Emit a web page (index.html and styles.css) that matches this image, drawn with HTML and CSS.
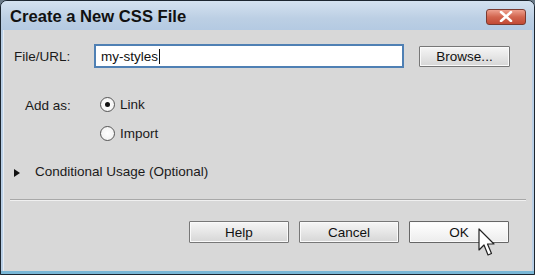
FILE: index.html
```html
<!DOCTYPE html>
<html>
<head>
<meta charset="utf-8">
<link rel="stylesheet" href="styles.css">
</head>
<body>
<div class="window">
  <div class="titlebar">
    <span class="title">Create a New CSS File</span>
    <span class="close"><svg width="16" height="11" viewBox="0 0 16 11"><path d="M3 1 L13 10 M13 1 L3 10" stroke="#fff" stroke-width="2.6" stroke-linecap="round"/></svg></span>
  </div>
  <div class="content">
    <div class="row-file">
      <span class="label">File/URL:</span>
      <div class="input">my-styles<span class="caret"></span></div>
      <button class="btn browse">Browse...</button>
    </div>
    <div class="row-add">
      <span class="label add">Add as:</span>
      <div class="radios">
        <div class="radio-row"><span class="radio checked"></span><span>Link</span></div>
        <div class="radio-row"><span class="radio"></span><span>Import</span></div>
      </div>
    </div>
    <div class="row-cond">
      <span class="tri"></span><span>Conditional Usage (Optional)</span>
    </div>
    <div class="sep"></div>
    <div class="actions">
      <button class="btn act">Help</button>
      <button class="btn act">Cancel</button>
      <button class="btn act ok">OK</button>
    </div>
  </div>
  <svg class="pointer" width="20" height="30" viewBox="0 0 20 30"><path d="M1 1 L1 22 L6 17 L10 27 L13.5 25.5 L9.5 16 L16 16 Z" fill="#fff" stroke="#222" stroke-width="1.2" stroke-linejoin="round"/></svg>
</div>
</body>
</html>
```
FILE: styles.css
```css
html, body { margin: 0; padding: 0; background: #6a7a88; }
body { width: 535px; height: 275px; overflow: hidden; font-family: "Liberation Sans", Arial, sans-serif; font-size: 13.5px; color: #1a1a1a; }
.window {
  position: relative;
  width: 535px; height: 275px; box-sizing: border-box;
  border: 1px solid #1c2630; border-top-left-radius: 7px; border-top-right-radius: 7px;
  background: #b9cfe6;
  display: flex; flex-direction: column;
  padding: 0 2px 3px 2px;
  box-shadow: inset 0 -3px 0 #7ab7d6;
}
.titlebar {
  height: 29px; display: flex; align-items: center; justify-content: space-between;
  background: linear-gradient(#d4e2f0, #bccfe4 60%, #b4cae2);
  margin: 0 -2px; padding: 0 8px 0 9px;
  border-top-left-radius: 6px; border-top-right-radius: 6px;
}
.title { font-weight: bold; font-size: 16.6px; color: #111; padding-top: 2px; }
.close {
  width: 40px; height: 16px; box-sizing: border-box; margin-top: 2px;
  border: 1px solid #7a3a30; border-radius: 3px;
  background: linear-gradient(#eea08e, #d2654f 50%, #c24a35);
  display: flex; align-items: center; justify-content: center;
}
.content {
  flex: 1; background: #d8d8d8; display: flex; flex-direction: column;
  border-left: 1px solid #e6ecf2;
}
.row-file { display: flex; align-items: center; margin-top: 14px; height: 24px; }
.label { width: 80px; padding-left: 10px; }
.input {
  width: 310px; height: 24px; box-sizing: border-box;
  border: 2px solid #4f80b4; background: #fff;
  display: flex; align-items: center; padding-left: 5px; color: #111;
}
.caret { width: 1px; height: 15px; background: #111; margin-left: 1px; }
.btn {
  font-family: inherit; font-size: 13.5px; color: #111;
  height: 21px; box-sizing: border-box; padding: 0;
  border: 1px solid #777; border-radius: 1px;
  background: linear-gradient(#f6f6f6, #e6e6e6 50%, #d6d6d6);
  box-shadow: inset 0 0 0 1px #fafafa;
}
.browse { width: 91px; margin-left: 15px; }
.row-add { display: flex; margin-top: 28px; }
.label.add { width: 75px; padding-left: 21px; padding-top: 2px; }
.radios { display: flex; flex-direction: column; gap: 12px; }
.radio-row { display: flex; align-items: center; gap: 5px; height: 17px; }
.radio {
  width: 15px; height: 15px; box-sizing: border-box; border-radius: 50%;
  border: 1px solid #555; background: radial-gradient(#fff, #eee);
  display: flex; align-items: center; justify-content: center;
}
.radio.checked::after { content: ""; width: 5px; height: 5px; border-radius: 50%; background: #111; }
.row-cond { display: flex; align-items: center; margin-top: 22px; padding-left: 10px; gap: 15px; }
.tri { width: 0; height: 0; border-top: 4px solid transparent; border-bottom: 4px solid transparent; border-left: 6px solid #111; margin-top: 2px; }
.sep { height: 1px; background: #a8a8a8; border-bottom: 1px solid #f0f0f0; margin: 20px 6px 0 6px; }
.actions { display: flex; justify-content: flex-end; gap: 10px; margin-top: 20px; padding-right: 23px; }
.act { width: 100px; height: 22px; }
.ok { background: linear-gradient(#ffffff, #f6f6f6 50%, #ececec); border-color: #666; }
.pointer { position: absolute; left: 477px; top: 227px; }
```
